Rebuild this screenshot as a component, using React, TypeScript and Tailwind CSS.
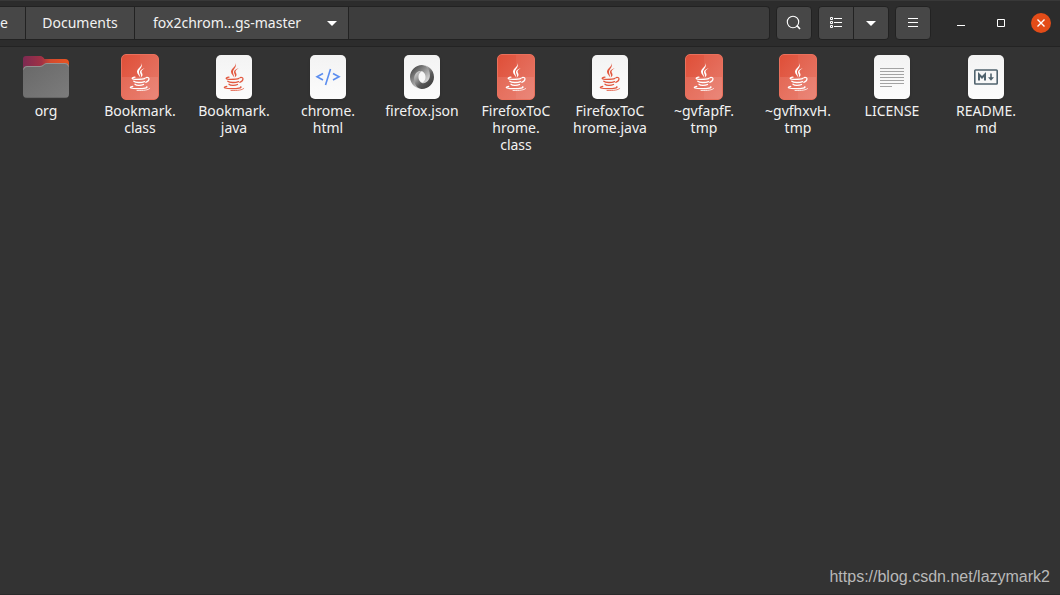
import React from 'react';

type FileKind = 'folder' | 'class' | 'java' | 'html' | 'json' | 'text' | 'markdown';

interface FileItem {
    kind: FileKind;
    // the name, already split where the label wraps
    lines: string[];
}

const files: FileItem[] = [
    { kind: 'folder', lines: ['org'] },
    { kind: 'class', lines: ['Bookmark.', 'class'] },
    { kind: 'java', lines: ['Bookmark.', 'java'] },
    { kind: 'html', lines: ['chrome.', 'html'] },
    { kind: 'json', lines: ['firefox.json'] },
    { kind: 'class', lines: ['FirefoxToC', 'hrome.', 'class'] },
    { kind: 'java', lines: ['FirefoxToC', 'hrome.java'] },
    { kind: 'class', lines: ['~gvfapfF.', 'tmp'] },
    { kind: 'class', lines: ['~gvfhxvH.', 'tmp'] },
    { kind: 'text', lines: ['LICENSE'] },
    { kind: 'markdown', lines: ['README.', 'md'] },
];

const FolderIcon = () => (
    <svg width="48" height="46" viewBox="0 0 48 46" aria-hidden="true">
        <defs>
            <linearGradient id="folder-back" x1="0" y1="0" x2="1" y2="0">
                <stop offset="0" stopColor="#7d2a52" />
                <stop offset="0.4" stopColor="#a03145" />
                <stop offset="0.6" stopColor="#d24a2e" />
                <stop offset="1" stopColor="#e95420" />
            </linearGradient>
            <linearGradient id="folder-front" x1="0" y1="0" x2="1" y2="1">
                <stop offset="0" stopColor="#686868" />
                <stop offset="1" stopColor="#7c7c7c" />
            </linearGradient>
        </defs>
        <path d="M1 5a3 3 0 0 1 3-3h14c1.500 0 2.500.6 3.300 1.600L22.500 5H43a4 4 0 0 1 4 4v14H1z" fill="url(#folder-back)" />
        <path d="M1 16a4 4 0 0 1 4-4h13c1.500 0 2.600-.5 3.500-1.400C22.600 9.500 23.700 9 25 9h18a4 4 0 0 1 4 4v27a4 4 0 0 1-4 4H5a4 4 0 0 1-4-4z" fill="url(#folder-front)" />
        <path d="M1.500 15.500A3.500 3.500 0 0 1 5 12.500h13c1.500 0 2.600-.5 3.500-1.400C22.600 10 23.700 9.500 25 9.500h18a3.500 3.500 0 0 1 3.500 3" fill="none" stroke="#a09a9a" strokeWidth="0.8" />
        <path d="M3 43.700h42" stroke="#555" strokeWidth="0.6" />
    </svg>
);

const JavaIcon = () => (
    <svg width="22" height="28" viewBox="0 0 22 28" fill="none" stroke="currentColor" strokeLinecap="round" aria-hidden="true">
        {/* steam */}
        <path d="M12.300 0C13.800 3.400 8.200 5.300 8 8.600C7.900 11 10.200 12.600 11 14.300C11.100 11.600 9.800 10.600 10 8.700C10.200 6.200 14.500 3.800 12.300 0Z" fill="currentColor" stroke="none" />
        <path d="M15.800 5C12.500 6.200 10.800 7.600 11 9.300C11.200 11 12.700 11.900 11.600 14.400C14.600 12.400 13.400 10.800 12.700 9.400C12 7.900 13.300 6.700 15.800 5Z" fill="currentColor" stroke="none" />
        {/* cup */}
        <path d="M6 14.200C1.500 15 2.500 16.300 8 16.300C11.500 16.300 14.500 16 16 15.400" strokeWidth="1.200" />
        <path d="M4.800 18.200C6.500 19.900 12.500 19.800 15.500 18.600" strokeWidth="1.300" />
        <path d="M6 21.300C7.500 22.700 12 22.700 14.500 21.500" strokeWidth="1.300" />
        <path d="M17 14.600C21.500 13.600 20.500 18.200 16.800 19.300" strokeWidth="1.200" />
        {/* saucer */}
        <path d="M3.800 23.300C-1.500 24.600 2.500 25.700 9 25.700C15 25.700 19 25 17.800 23.700" strokeWidth="1.200" />
        <path d="M8 27.500C14.500 27.800 19.500 27 20.800 25.400" strokeWidth="0.8" />
    </svg>
);

const JsonIcon = () => (
    <svg width="24" height="24" viewBox="0 0 160 160" aria-hidden="true">
        <defs>
            <linearGradient id="json-dark" gradientUnits="userSpaceOnUse" x1="23" y1="27" x2="136" y2="140">
                <stop offset="0" stopColor="#555" />
                <stop offset="1" stopColor="#fff" />
            </linearGradient>
            <linearGradient id="json-light" gradientUnits="userSpaceOnUse" x1="136" y1="132" x2="23" y2="20">
                <stop offset="0" stopColor="#444" />
                <stop offset="0.3" stopColor="#5a5a5a" />
                <stop offset="1" stopColor="#fff" />
            </linearGradient>
        </defs>
        <path fillRule="evenodd" fill="url(#json-dark)" d="M79.865,119.1c35.398,48.255,70.04-13.469,69.989-50.587C149.8,24.627,105.312,0.1,79.836,0.1C38.944,0.1,0,33.895,0,80.135C0,131.531,44.64,160,79.836,160c-7.965-1.147-34.507-6.834-34.863-67.967c-0.24-41.347,13.488-57.866,34.805-50.599c0.477,0.177,23.514,9.265,23.514,38.951C103.292,109.946,79.865,119.1,79.865,119.1z" />
        <path fillRule="evenodd" fill="url(#json-light)" d="M79.823,41.401C56.433,33.339,27.78,52.618,27.78,91.23C27.78,154.277,74.5,160,80.164,160C121.056,160,160,126.205,160,79.965C160,28.569,115.36,0.1,80.164,0.1c9.748-1.35,52.541,10.55,52.541,69.037c0,38.141-31.953,58.905-52.735,50.033c-0.477-0.177-23.514-9.265-23.514-38.951C56.456,50.658,79.823,41.401,79.823,41.401z" />
    </svg>
);

const CodeIcon = () => (
    <svg width="26" height="18" viewBox="0 0 26 18" fill="none" stroke="#5b8def" strokeWidth="1.600" aria-hidden="true">
        <path d="M8 5.500 2 8.800 8 12M18 5.500 24 8.800 18 12M15.500 1 10.500 17" />
    </svg>
);

const TextIcon = () => (
    <svg width="24" height="20" viewBox="0 0 24 20" stroke="#a3a3a3" aria-hidden="true">
        <path d="M0 1.500H24M0 4.500H24M0 7.500H24M0 10.500H24M0 13.500H24M0 16.500H24M0 19.500H12" />
    </svg>
);

const MarkdownIcon = () => (
    <svg width="24" height="16" viewBox="0 0 24 16" fill="none" stroke="#50636e" aria-hidden="true">
        <rect x="0.800" y="1" width="22.400" height="14" rx="0.800" strokeWidth="1.600" />
        <path d="M5 11.500V5.500L8 8.500L11 5.500V11.500" strokeWidth="2" />
        <path d="M17 4.500V9" strokeWidth="1.600" />
        <path d="M14 8.200H20L17 11.800Z" fill="#50636e" stroke="none" />
    </svg>
);

const Sheet = ({ children }: { children: React.ReactNode }) => (
    <span className="flex h-11 w-9 items-center justify-center rounded-[5px] bg-gradient-to-b from-[#f3f3f3] to-[#fcfcfc] shadow-sm">
        {children}
    </span>
);

const FileIcon = ({ kind }: { kind: FileKind }) => {
    switch (kind) {
        case 'folder':
            return <FolderIcon />;
        case 'class':
            return (
                <span className="relative flex h-[46px] w-[38px] items-center justify-center overflow-hidden rounded-[5px] border border-[#e9705c] bg-gradient-to-br from-[#df4f38] to-[#e67262] text-white">
                    <span className="absolute inset-y-0 right-0 w-1/2 bg-white/5" />
                    <span className="absolute inset-x-0 bottom-0 h-1/2 bg-white/10" />
                    <span className="relative"><JavaIcon /></span>
                </span>
            );
        case 'java':
            return <Sheet><span className="text-[#e2583f]"><JavaIcon /></span></Sheet>;
        case 'html':
            return <Sheet><CodeIcon /></Sheet>;
        case 'json':
            return <Sheet><JsonIcon /></Sheet>;
        case 'text':
            return <Sheet><TextIcon /></Sheet>;
        case 'markdown':
            return <Sheet><MarkdownIcon /></Sheet>;
    }
};

const Caret = () => (
    <svg width="10" height="5" viewBox="0 0 10 5" fill="#fff" aria-hidden="true">
        <path d="M0 0h10L5 5z" />
    </svg>
);

const toolButton = 'flex items-center justify-center bg-[#474747] text-white hover:bg-[#505050]';

const PathBar = () => (
    <nav aria-label="Path" className="flex h-[34px] min-w-0 flex-1 overflow-hidden rounded-r border border-l-0 border-[#222] bg-[#3d3d3d] whitespace-nowrap">
        <button type="button" className="w-[26px] border-r border-[#222] bg-[#474747] text-left hover:bg-[#505050]">e</button>
        <button type="button" className="w-[109px] border-r border-[#222] bg-[#474747] hover:bg-[#505050]">Documents</button>
        <button type="button" className="flex w-[214px] items-center justify-between border-r border-[#222] bg-[#474747] pr-[11px] pl-[18px] hover:bg-[#505050]">
            fox2chrom…gs-master
            <Caret />
        </button>
    </nav>
);

const HeaderBar = () => (
    <header className="flex gap-1.5 border-t border-b border-t-[#383838] border-b-[#232323] bg-[#2c2c2c] pt-[5px] pr-[9px] pb-1.5">
        <PathBar />
        <button type="button" aria-label="Search" className={`${toolButton} h-[34px] w-9 rounded border border-[#222]`}>
            <svg width="16" height="16" viewBox="0 0 16 16" fill="none" stroke="currentColor" aria-hidden="true">
                <circle cx="7" cy="7" r="5.700" strokeWidth="1.100" />
                <path d="M10.800 10.500 14 14" strokeWidth="1.600" />
            </svg>
        </button>
        <div className="flex h-[34px] overflow-hidden rounded border border-[#222]">
            <button type="button" aria-label="List view" className={`${toolButton} w-[35px] border-r border-[#222]`}>
                <svg width="12" height="12" viewBox="0 0 12 12" fill="none" stroke="currentColor" aria-hidden="true">
                    <path d="M.5.5h2v2h-2zM.5 4.500h2v2h-2zM.5 8.500h2v2h-2zM4 1.500h8M4 5.500h8M4 9.500h8" />
                </svg>
            </button>
            <button type="button" aria-label="View options" className={`${toolButton} w-[34px]`}><Caret /></button>
        </div>
        <button type="button" aria-label="Menu" className={`${toolButton} h-[34px] w-9 rounded border border-[#222]`}>
            <svg width="10" height="10" viewBox="0 0 10 10" stroke="currentColor" aria-hidden="true">
                <path d="M0 .5h10M0 4.500h10M0 8.500h10" />
            </svg>
        </button>
        <div className="ml-3.5 flex items-center gap-5">
            <button type="button" aria-label="Minimize" className="flex size-5 items-center justify-center">
                <svg width="8" height="8" viewBox="0 0 8 8" stroke="#fff" aria-hidden="true"><path d="M0 6.500h8" /></svg>
            </button>
            <button type="button" aria-label="Maximize" className="flex size-5 items-center justify-center">
                <svg width="8" height="8" viewBox="0 0 8 8" fill="none" stroke="#fff" aria-hidden="true"><path d="M.5.5h7v7h-7z" /></svg>
            </button>
            <button type="button" aria-label="Close" className="flex size-5 items-center justify-center rounded-full bg-[#e34c18]">
                <svg width="8" height="8" viewBox="0 0 8 8" stroke="#fff" strokeWidth="1.400" aria-hidden="true"><path d="m.5.5 7 7M7.500.5l-7 7" /></svg>
            </button>
        </div>
    </header>
);

const App = () => {
    return (
        <div className="flex min-h-screen flex-col bg-[#333] font-['Noto_Sans',sans-serif] text-sm text-[#f2f2f2]">
            <HeaderBar />
            <main className="flex-1 pt-[7px] pl-[5px]">
                <ul className="grid grid-cols-[repeat(auto-fill,82px)] gap-x-3 gap-y-6">
                    {files.map((file) => (
                        <li key={file.lines.join('')}>
                            <button type="button" className="flex w-full flex-col items-center gap-0.5">
                                <span className="flex h-[46px] items-center">
                                    <FileIcon kind={file.kind} />
                                </span>
                                <span className="leading-[17px] whitespace-nowrap">
                                    {file.lines.map((line) => (
                                        <span key={line} className="block">{line}</span>
                                    ))}
                                </span>
                            </button>
                        </li>
                    ))}
                </ul>
            </main>
            <footer className="border-b border-[#2a2a2a] px-2.5 pb-[5px] text-right font-['Liberation_Sans',sans-serif] text-base text-[#b9b9b9]">
                <a href="https://blog.csdn.net/lazymark2">https://blog.csdn.net/lazymark2</a>
            </footer>
        </div>
    );
};

export default App;
